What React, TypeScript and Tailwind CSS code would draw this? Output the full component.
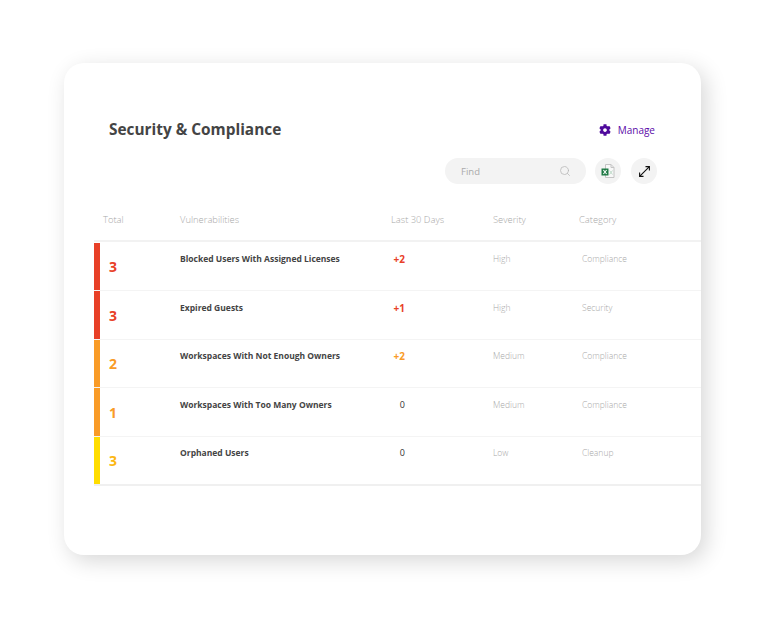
import { FaCog } from "react-icons/fa";
import { Search } from "lucide-react";

type Row = {
  total: number;
  name: string;
  change: string;
  severity: string;
  category: string;
  bar: string;
  text: string;
  height: string;
  pad: string;
};

const rows: Row[] = [
  { total: 3, name: "Blocked Users With Assigned Licenses", change: "+2", severity: "High", category: "Compliance", bar: "bg-[#e84027]", text: "text-[#e84027]", height: "h-[48px]", pad: "pt-[9px]" },
  { total: 3, name: "Expired Guests", change: "+1", severity: "High", category: "Security", bar: "bg-[#e84027]", text: "text-[#e84027]", height: "h-[49px]", pad: "pt-[10px]" },
  { total: 2, name: "Workspaces With Not Enough Owners", change: "+2", severity: "Medium", category: "Compliance", bar: "bg-[#f99b27]", text: "text-[#f99b27]", height: "h-[48px]", pad: "pt-[9px]" },
  { total: 1, name: "Workspaces With Too Many Owners", change: "0", severity: "Medium", category: "Compliance", bar: "bg-[#f99b27]", text: "text-[#f99b27]", height: "h-[49px]", pad: "pt-[10px]" },
  { total: 3, name: "Orphaned Users", change: "0", severity: "Low", category: "Cleanup", bar: "bg-[#ffdd00]", text: "text-[#fcb712]", height: "h-[47px]", pad: "pt-[9px]" },
];

const ExcelIcon = () => (
  <svg width="14" height="14" viewBox="0 0 14 14">
    <path d="M4.5 0.5h5.5l3 3v10h-8.5z" fill="#f8f8f8" stroke="#c4c4c4" />
    <path d="M10 0.5v3h3" fill="none" stroke="#c4c4c4" />
    <path d="M8.5 6.5l3 4M11.5 6.5l-3 4" stroke="#b8d6c3" strokeWidth="0.9" />
    <rect x="0.5" y="4.5" width="7" height="7" fill="#1f7a45" />
    <path d="M2.4 6l3.2 4M5.600 6l-3.2 4" stroke="#fff" strokeWidth="1.1" />
  </svg>
);

const ExpandIcon = () => (
  <svg width="11" height="11" viewBox="0 0 11 11" fill="none" stroke="#111" strokeWidth="1.1">
    <path d="M6.5 0.6h3.9v3.9M10.4 0.6L0.6 10.4M0.6 6.5v3.9h3.9" />
  </svg>
);

export default function App() {
  return (
    <div className="min-h-[618px] w-[765px] bg-white pl-[64px] pt-[63px] font-['Open_Sans','Noto_Sans',sans-serif]">
      <div className="h-[492px] w-[637px] overflow-hidden rounded-[20px] bg-white pt-[55px] shadow-[5px_6px_22px_rgba(0,0,0,0.16)]">
        <div className="flex h-[24px] items-center justify-between pl-[45px] pr-[46px]">
          <h1 className="text-[15.4px] font-bold text-[#444444]">Security &amp; Compliance</h1>
          <div className="flex items-center gap-[7px] text-[10px] text-[#5b0aa8]">
            <FaCog className="h-[12px] w-[12px] text-[#4f0a9c]" />
            <span>Manage</span>
          </div>
        </div>

        <div className="mt-[16px] flex items-center justify-end gap-[9px] pr-[44px]">
          <div className="flex h-[26px] w-[141px] items-center justify-between rounded-full bg-[#f3f3f3] pl-[16px] pr-[15px] text-[9.5px] text-[#aaaaaa]">
            <span className="pt-[2px]">Find</span>
            <Search className="h-[12px] w-[12px] text-[#b5b5b5]" strokeWidth={1.5} />
          </div>
          <div className="flex h-[26px] w-[26px] items-center justify-center rounded-full bg-[#f3f3f3]">
            <ExcelIcon />
          </div>
          <div className="ml-px flex h-[26px] w-[26px] items-center justify-center rounded-full bg-[#f3f3f3]">
            <ExpandIcon />
          </div>
        </div>

        <div className="ml-[30px] mt-[20px]">
          <div className="grid h-[38px] grid-cols-[86px_211px_102px_86px_1fr] border-b-2 border-[#f2f2f2] pt-[10px] text-[9.4px] font-light leading-[12px] text-[#a8a8a8]">
            <span className="pl-[9px]">Total</span>
            <span>Vulnerabilities</span>
            <span>Last 30 Days</span>
            <span>Severity</span>
            <span>Category</span>
          </div>
          <div className="mt-px border-b-2 border-[#f0f0f0]">
            {rows.map((row, i) => (
              <div key={i} className={`flex ${row.height} border-b border-[#f4f4f4] last:border-b-0`}>
                <div className={`w-[6px] shrink-0 ${row.bar}`} />
                <div className={`grid flex-1 grid-cols-[80px_211px_102px_89px_1fr] ${row.pad} text-[8.5px] font-light leading-[14px] text-[#a8a8a8]`}>
                  <span className={`pl-[9px] pt-[7px] text-[14px] font-bold leading-[16px] ${row.text}`}>{row.total}</span>
                  <span className="font-bold text-[#444444]">{row.name}</span>
                  <span className={`w-[14px] text-right ${row.change === "0" ? "text-[9px] font-normal text-[#333333]" : `text-[10px] font-bold ${row.text}`}`}>
                    {row.change}
                  </span>
                  <span>{row.severity}</span>
                  <span>{row.category}</span>
                </div>
              </div>
            ))}
          </div>
        </div>
      </div>
    </div>
  );
}
